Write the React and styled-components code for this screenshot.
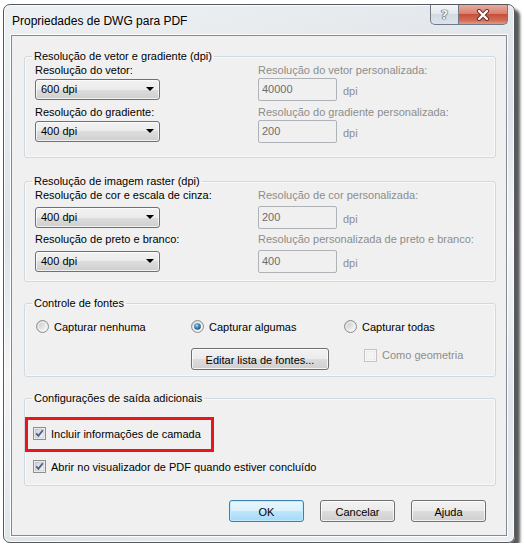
import React from 'react'
import styled, { createGlobalStyle, css } from 'styled-components'

const FONT = `"Liberation Sans", Arial, sans-serif`

const GlobalStyle = createGlobalStyle`
  html, body {
    margin: 0;
    background: #ffffff;
  }
  body {
    font-family: ${FONT};
    font-size: 11px;
    color: #000;
  }
  * {
    box-sizing: border-box;
  }
`

const Window = styled.div`
  margin: 4px 0 0 3px;
  width: 512px;
  border: 1px solid #55595e;
  border-radius: 7px;
  background: linear-gradient(165deg, #eef1f3 0%, #dde2e7 35%, #f3f5f7 55%, #e0e5ea 80%, #eceff2 100%);
  box-shadow: inset 0 0 0 1px rgba(255, 255, 255, 0.85), 5px 5px 3px rgba(0, 0, 0, 0.65);
  padding: 0 7px 6px 7px;
  display: flex;
  flex-direction: column;
`

const TitleBar = styled.div`
  height: 30px;
  display: flex;
  margin-right: -1px;
`

const Title = styled.div`
  flex: 1;
  align-self: center;
  padding: 2px 0 0 1px;
  font-size: 12px;
  color: #000;
`

const CaptionButtons = styled.div`
  display: flex;
  height: 20px;
`

const CaptionButton = styled.div`
  height: 20px;
  display: flex;
  align-items: center;
  justify-content: center;
  border: 1px solid #6f7a86;
  border-top: none;
  ${(p) =>
    p.$close
      ? css`
          width: 49px;
          border-left: none;
          border-radius: 0 0 5px 0;
          background: linear-gradient(#e9a99d 0%, #d9816f 45%, #c6503c 50%, #d26a55 80%, #e29a85 100%);
        `
      : css`
          width: 29px;
          border-radius: 0 0 0 5px;
          background: linear-gradient(#f4f6f8 0%, #e4e9ee 45%, #d3dae2 50%, #dde3ea 100%);
        `}
`

const HelpGlyph = styled.span`
  font-family: "DejaVu Sans", sans-serif;
  font-size: 13px;
  font-weight: bold;
  color: #eef2f6;
  text-shadow: 0 0 1px #3d4a58, 0 0 1px #3d4a58, 0 0 1px #3d4a58;
  margin-top: -1px;
`

const Client = styled.div`
  border: 1px solid #828a93;
  box-shadow: 0 0 0 1px rgba(255, 255, 255, 0.9);
  background: #f0f0f0;
  padding: 13px 10px 13px 12px;
  display: flex;
  flex-direction: column;
`

const Group = styled.fieldset`
  margin: ${(p) => p.$mt || 0}px 0 0 0;
  padding: 0 10px ${(p) => p.$pb}px ${(p) => p.$pl || 10}px;
  border: 1px solid #d0d9df;
  border-radius: 3px;
  box-shadow: inset 0 0 0 1px rgba(255, 255, 255, 0.6);
  min-width: 0;
`

const Legend = styled.legend`
  padding: 0 2px;
  margin-left: ${(p) => p.$ml || -3}px;
  line-height: 14px;
`

const Columns = styled.div`
  display: grid;
  grid-template-columns: 223px 1fr;
`

const Column = styled.div`
  display: flex;
  flex-direction: column;
  gap: ${(p) => p.$gap}px;
`

const Field = styled.div`
  display: flex;
  flex-direction: column;
  gap: ${(p) => p.$gap}px;
`

const Label = styled.div`
  line-height: 14px;
  white-space: nowrap;
  color: ${(p) => (p.$disabled ? '#8d8d8d' : '#000')};
`

const ControlRow = styled.div`
  height: 22px;
  display: flex;
  align-items: center;
  gap: 6px;
`

const Select = styled.div`
  width: 125px;
  height: 21px;
  border: 1px solid #707070;
  border-radius: 3px;
  background: linear-gradient(#f2f2f2 0%, #ebebeb 50%, #dddddd 50%, #cfcfcf 100%);
  box-shadow: inset 0 0 0 1px rgba(255, 255, 255, 0.7);
  display: flex;
  align-items: center;
  justify-content: space-between;
  padding: 0 4px 0 5px;
`

const Arrow = styled.span`
  width: 0;
  height: 0;
  border-left: 4px solid transparent;
  border-right: 4px solid transparent;
  border-top: 4px solid #000;
  margin-right: 1px;
`

const TextInput = styled.div`
  width: 79px;
  height: 23px;
  border: 1px solid #afb3b8;
  border-radius: 2px;
  background: #f0f0f0;
  color: #6d6d6d;
  padding: 3px 0 0 3px;
  line-height: 14px;
`

const Unit = styled.span`
  color: #8d8d8d;
  padding-top: 3px;
`

const OptionGrid = styled.div`
  display: grid;
  grid-template-columns: 155px 153px 1fr;
  row-gap: 12px;
  margin-top: 7px;
  padding-left: 1px;
`

const Option = styled.label`
  display: flex;
  align-items: center;
  gap: 5px;
  height: ${(p) => p.$h || 19}px;
  white-space: nowrap;
  color: ${(p) => (p.$disabled ? '#8d8d8d' : '#000')};
  margin-left: ${(p) => p.$ml || 0}px;
  margin-top: ${(p) => p.$mt || 0}px;
  align-self: start;
`

const Button = styled.div`
  width: ${(p) => p.$w || 75}px;
  height: 22px;
  border: 1px solid ${(p) => (p.$default ? '#3c7fb1' : '#707070')};
  border-radius: 3px;
  display: flex;
  align-items: center;
  justify-content: center;
  padding-top: 1px;
  background: ${(p) =>
    p.$default
      ? 'linear-gradient(#eaf6fd 0%, #d9f0fc 50%, #bee6fd 50%, #a7d9f5 100%)'
      : 'linear-gradient(#f2f2f2 0%, #ebebeb 50%, #dddddd 50%, #cfcfcf 100%)'};
  box-shadow: inset 0 0 0 1px ${(p) => (p.$default ? 'rgba(190, 235, 255, 0.9)' : 'rgba(255, 255, 255, 0.75)')};
`

const Highlight = styled.div`
  width: fit-content;
  margin: 12px 0 0 -8px;
  border: 3px solid #e8151b;
  padding: 4px 10px 6px 5px;
`

const ButtonRow = styled.div`
  display: flex;
  justify-content: flex-end;
  gap: 16px;
  margin: 14px 10px 0 0;
`

function CloseGlyph() {
  return (
    <svg width="14" height="12" viewBox="0 0 14 12">
      <path d="M3 2 L11 10 M11 2 L3 10" stroke="#6b2a20" strokeWidth="4.2" strokeLinecap="round" />
      <path d="M3 2 L11 10 M11 2 L3 10" stroke="#ffffff" strokeWidth="2.4" strokeLinecap="round" />
    </svg>
  )
}

function Checkbox({ checked, disabled }) {
  return (
    <svg width="13" height="13" viewBox="0 0 13 13">
      <defs>
        <linearGradient id="cbFill" x1="0" y1="0" x2="1" y2="1">
          <stop offset="0" stopColor="#cbcfd5" />
          <stop offset="1" stopColor="#f6f6f6" />
        </linearGradient>
      </defs>
      <rect x="0.5" y="0.5" width="12" height="12" fill="#fff" stroke={disabled ? '#c4c4c4' : '#8e8f8f'} />
      <rect x="2" y="2" width="9" height="9" fill={disabled ? '#f4f4f4' : 'url(#cbFill)'} stroke={disabled ? '#e0e0e0' : '#aeb3b9'} strokeWidth="0.6" />
      {checked && (
        <path d="M3.2 6.4 L5.4 8.8 L9.8 3.2" fill="none" stroke="#4a5f8a" strokeWidth="1.8" />
      )}
    </svg>
  )
}

function Radio({ checked }) {
  return (
    <svg width="13" height="13" viewBox="0 0 13 13">
      <defs>
        <linearGradient id="rdFill" x1="0" y1="0" x2="1" y2="1">
          <stop offset="0" stopColor="#c9ccd1" />
          <stop offset="1" stopColor="#f7f7f7" />
        </linearGradient>
        <radialGradient id="rdDot" cx="0.4" cy="0.35" r="0.7">
          <stop offset="0" stopColor="#a6def7" />
          <stop offset="0.5" stopColor="#3a86b8" />
          <stop offset="1" stopColor="#1b4f7a" />
        </radialGradient>
      </defs>
      <circle cx="6.5" cy="6.5" r="6" fill="url(#rdFill)" stroke="#8e8f8f" />
      <circle cx="6.5" cy="6.5" r="4.2" fill="url(#rdFill)" stroke="#ffffff" strokeWidth="0.6" />
      {checked && <circle cx="6.5" cy="6.5" r="3.3" fill="url(#rdDot)" />}
    </svg>
  )
}

function ResolutionGroup({ title, mt, pb, gap, fieldGap, left, right }) {
  return (
    <Group $mt={mt} $pb={pb}>
      <Legend>{title}</Legend>
      <Columns>
        <Column $gap={fieldGap}>
          {left.map((f) => (
            <Field key={f.label} $gap={gap}>
              <Label>{f.label}</Label>
              <ControlRow>
                <Select>
                  <span>{f.value}</span>
                  <Arrow />
                </Select>
              </ControlRow>
            </Field>
          ))}
        </Column>
        <Column $gap={fieldGap}>
          {right.map((f) => (
            <Field key={f.label} $gap={gap}>
              <Label $disabled>{f.label}</Label>
              <ControlRow>
                <TextInput>{f.value}</TextInput>
                <Unit>dpi</Unit>
              </ControlRow>
            </Field>
          ))}
        </Column>
      </Columns>
    </Group>
  )
}

export default function App() {
  return (
    <>
      <GlobalStyle />
      <Window>
        <TitleBar>
          <Title>Propriedades de DWG para PDF</Title>
          <CaptionButtons>
            <CaptionButton>
              <HelpGlyph>?</HelpGlyph>
            </CaptionButton>
            <CaptionButton $close>
              <CloseGlyph />
            </CaptionButton>
          </CaptionButtons>
        </TitleBar>
        <Client>
          <ResolutionGroup
            title="Resolução de vetor e gradiente (dpi)"
            pb={15}
            gap={1}
            fieldGap={5}
            left={[
              { label: 'Resolução do vetor:', value: '600 dpi' },
              { label: 'Resolução do gradiente:', value: '400 dpi' },
            ]}
            right={[
              { label: 'Resolução do vetor personalizada:', value: '40000' },
              { label: 'Resolução do gradiente personalizada:', value: '200' },
            ]}
          />
          <ResolutionGroup
            title="Resolução de imagem raster (dpi)"
            mt={16}
            pb={9}
            gap={4}
            fieldGap={4}
            left={[
              { label: 'Resolução de cor e escala de cinza:', value: '400 dpi' },
              { label: 'Resolução de preto e branco:', value: '400 dpi' },
            ]}
            right={[
              { label: 'Resolução de cor personalizada:', value: '200' },
              { label: 'Resolução personalizada de preto e branco:', value: '400' },
            ]}
          />

          <Group $mt={14} $pb={6}>
            <Legend>Controle de fontes</Legend>
            <OptionGrid>
              <Option>
                <Radio />
                Capturar nenhuma
              </Option>
              <Option>
                <Radio checked />
                Capturar algumas
              </Option>
              <Option>
                <Radio />
                Capturar todas
              </Option>
              <div />
              <Button $w={138}>Editar lista de fontes...</Button>
              <Option $disabled $ml={20} $h={14}>
                <Checkbox disabled />
                Como geometria
              </Option>
            </OptionGrid>
          </Group>

          <Group $mt={14} $pb={9} $pl={8}>
            <Legend $ml={-1}>Configurações de saída adicionais</Legend>
            <Highlight>
              <Option $ml={0}>
                <Checkbox checked />
                Incluir informações de camada
              </Option>
            </Highlight>
            <Option $mt={5}>
              <Checkbox checked />
              Abrir no visualizador de PDF quando estiver concluído
            </Option>
          </Group>

          <ButtonRow>
            <Button $default>OK</Button>
            <Button>Cancelar</Button>
            <Button>Ajuda</Button>
          </ButtonRow>
        </Client>
      </Window>
    </>
  )
}
